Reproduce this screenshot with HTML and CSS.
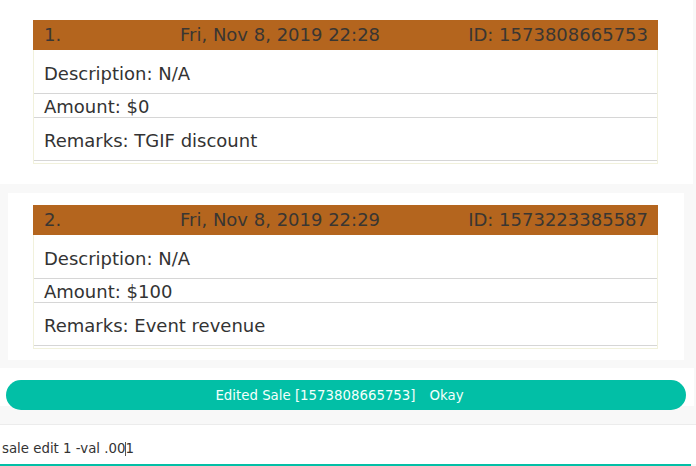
FILE: index.html
```html
<!DOCTYPE html>
<html>
<head>
<meta charset="utf-8">
<link rel="stylesheet" href="styles.css">
</head>
<body>
<div class="page">
  <section class="item item-active">
    <div class="card">
      <div class="card-head">
        <span class="num">1.</span>
        <span class="date">Fri, Nov 8, 2019 22:28</span>
        <span class="id">ID: 1573808665753</span>
      </div>
      <div class="card-body">
        <div class="row row-desc">Description: N/A</div>
        <div class="row row-amt">Amount: $0</div>
        <div class="row row-rem">Remarks: TGIF discount</div>
      </div>
    </div>
  </section>

  <section class="item item-plain">
    <div class="card">
      <div class="card-head">
        <span class="num">2.</span>
        <span class="date">Fri, Nov 8, 2019 22:29</span>
        <span class="id">ID: 1573223385587</span>
      </div>
      <div class="card-body">
        <div class="row row-desc">Description: N/A</div>
        <div class="row row-amt">Amount: $100</div>
        <div class="row row-rem">Remarks: Event revenue</div>
      </div>
    </div>
  </section>

  <div class="toast-wrap">
    <div class="toast">
      <span class="toast-msg">Edited Sale [1573808665753]</span>
      <span class="toast-btn">Okay</span>
    </div>
  </div>

  <div class="command">
    <div class="command-text">sale edit 1 -val .00<span class="caret"></span>1</div>
  </div>
  <div class="command-line"></div>
</div>
</body>
</html>
```

FILE: styles.css
```css
html, body {
  margin: 0;
  padding: 0;
  background: #f8f8f8;
}
body {
  font-family: "DejaVu Sans", sans-serif;
  color: #333;
  width: 696px;
  height: 466px;
  overflow: hidden;
}
.page {
  display: flex;
  flex-direction: column;
}
.item {
  background: #fff;
  box-sizing: border-box;
}
.item-active {
  width: 693px;
  padding: 20px 35px 20px 33px;
  margin-bottom: 9px;
}
.item-plain {
  width: 676px;
  margin-left: 8px;
  padding: 12px 26px 11px 25px;
  margin-bottom: 8px;
}
.card {
  width: 625px;
}
.card-head {
  height: 30px;
  background: #b4651e;
  color: #3a3632;
  font-size: 18px;
  line-height: 30px;
  display: grid;
  grid-template-columns: 136px auto 1fr;
  padding: 0 10px 0 11px;
}
.card-head .id {
  text-align: right;
}
.card-body {
  border: 1px solid #f1f1dc;
  border-top: none;
  padding-bottom: 2px;
}
.row {
  font-size: 18px;
  line-height: 21px;
  padding-left: 10px;
  border-bottom: 1px solid #d6d6d6;
}
.row-desc {
  padding-top: 13px;
  padding-bottom: 9px;
}
.row-amt {
  padding-top: 2px;
  padding-bottom: 0;
}
.row-rem {
  padding-top: 12px;
  padding-bottom: 9px;
}
.toast-wrap {
  width: 694px;
  height: 38px;
  background: #fff;
  margin-bottom: 18px;
}
.toast {
  margin: 12px 0 0 6px;
  width: 680px;
  height: 30px;
  border-radius: 15px;
  background: #02bfa6;
  color: #f4fffc;
  font-size: 13.33px;
  display: flex;
  align-items: center;
  justify-content: center;
}
.toast-btn {
  padding: 0 13px 0 14px;
}
.command {
  background: #fff;
  border-top: 1px solid #ececec;
  height: 39px;
  box-sizing: content-box;
}
.command-text {
  font-size: 13.33px;
  line-height: 15.5px;
  padding: 16px 0 0 2px;
  color: #333;
}
.caret {
  display: inline-block;
  width: 1px;
  height: 14px;
  background: #555;
  vertical-align: -3px;
  margin-right: -1px;
}
.command-line {
  width: 691px;
  height: 3px;
  background: #02bfa6;
}
```
